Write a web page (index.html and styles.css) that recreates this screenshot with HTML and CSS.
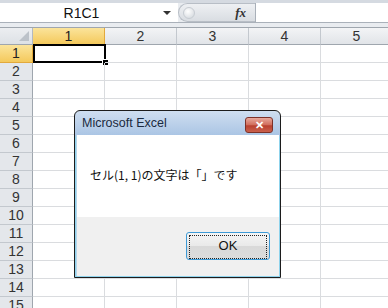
FILE: index.html
```html
<!DOCTYPE html>
<html lang="ja">
<head>
  <meta charset="UTF-8" />
  <title>Excel</title>
  <link rel="stylesheet" href="styles.css">
</head>
<body>

<div id="formula-bar">
  <div class="namebox">
    <span class="name">R1C1</span>
    <span class="drop"></span>
  </div>
  <div class="fx-box">
    <span class="knob"></span>
    <span class="fx">fx</span>
  </div>
  <div class="formula-input"></div>
</div>

<div id="sheet"></div>

<!-- メッセージボックス -->
<div class="dialog">
  <div class="dialog-title">
    <span>Microsoft Excel</span>
    <div class="close-btn">✕</div>
  </div>
  <div class="dialog-body">
    <p class="message">セル(1, 1)の文字は「」です</p>
  </div>
  <div class="dialog-foot">
    <button class="ok-btn"><span>OK</span></button>
  </div>
</div>

<script>
  const sheet = document.getElementById("sheet");
  let html = '<div class="corner"></div>';
  for (let c = 1; c <= 5; c++) {
    html += `<div class="colh${c === 1 ? ' active' : ''}">${c}</div>`;
  }
  for (let r = 1; r <= 15; r++) {
    html += `<div class="rowh${r === 1 ? ' active' : ''}">${r}</div>`;
    for (let c = 1; c <= 5; c++) {
      if (r === 1 && c === 1) {
        html += '<div class="cell"><div class="sel"><i class="handle"></i></div></div>';
      } else {
        html += '<div class="cell"></div>';
      }
    }
  }
  sheet.innerHTML = html;
</script>

</body>
</html>
```

FILE: styles.css
```css
body {
  margin: 0;
  width: 388px;
  height: 308px;
  overflow: hidden;
  background-color: #fff;
  font-family: 'Liberation Sans', Arial, sans-serif;
  color: #222;
  position: relative;
}

/* 数式バー */
#formula-bar {
  height: 28px;
  box-sizing: border-box;
  padding-top: 3px;
  background: linear-gradient(#d5dae1 0, #d5dae1 3px, #e9ecf0 3px);
  border-bottom: 1px solid #9fa6ae;
  display: flex;
  align-items: flex-start;
  position: relative;
}

#formula-bar::after {
  content: "";
  position: absolute;
  left: 0; right: 0; top: 22px;
  height: 1px;
  background-color: #aab1ba;
}

.namebox {
  width: 178px;
  height: 19px;
  background-color: #fff;
  display: flex;
  align-items: center;
  position: relative;
}

.name {
  flex: 1;
  text-align: center;
  font-size: 14px;
  color: #111;
}

.drop {
  width: 0;
  height: 0;
  border-left: 4px solid transparent;
  border-right: 4px solid transparent;
  border-top: 4px solid #333;
  margin-right: 7px;
}

.fx-box {
  width: 77px;
  height: 19px;
  box-sizing: border-box;
  border-radius: 10px 0 0 10px;
  border: 1px solid #b8bec6;
  border-right: none;
  background: linear-gradient(#eef0f3, #d9dde2);
  display: flex;
  align-items: center;
  justify-content: space-between;
  padding: 0 9px 0 4px;
}

.knob {
  width: 10px;
  height: 10px;
  border-radius: 50%;
  background: radial-gradient(circle at 40% 35%, #fff, #cfd4da);
  border: 1px solid #c7ccd2;
}

.fx {
  font-family: 'Liberation Serif', serif;
  font-style: italic;
  font-weight: bold;
  font-size: 13px;
  color: #333;
}

.formula-input {
  flex: 1;
  height: 19px;
  background-color: #fff;
  border-left: 1px solid #a9b0b9;
}

/* シート */
#sheet {
  display: grid;
  grid-template-columns: 33px repeat(5, 72px);
  grid-template-rows: 17px;
  grid-auto-rows: 18px;
}

#sheet > div {
  box-sizing: border-box;
}

.corner {
  background: linear-gradient(#eceef1, #dde1e6);
  border-right: 1px solid #b3b9c1;
  border-bottom: 1px solid #9fa6ae;
  position: relative;
}

.corner::after {
  content: "";
  position: absolute;
  right: 3px;
  bottom: 3px;
  border-left: 10px solid transparent;
  border-bottom: 10px solid #bcc2c9;
}

.colh {
  background: linear-gradient(#f3f4f6, #e1e4e8);
  border-right: 1px solid #c3c8ce;
  border-bottom: 1px solid #9fa6ae;
  text-align: center;
  font-size: 14px;
  line-height: 16px;
  color: #333;
}

.rowh {
  background-color: #e4e7eb;
  border-right: 1px solid #9fa6ae;
  border-bottom: 1px solid #c3c8ce;
  text-align: center;
  font-size: 14px;
  line-height: 17px;
  color: #333;
}

.colh.active,
.rowh.active {
  background: linear-gradient(#fbe49b, #f4c95c);
  border-color: #e2a93c;
  color: #222;
}

.cell {
  border-right: 1px solid #dadcdf;
  border-bottom: 1px solid #dadcdf;
  position: relative;
}

.sel {
  position: absolute;
  top: -1px; left: 0; right: -2px; bottom: -1px;
  border: 2px solid #000;
}

.handle {
  position: absolute;
  right: -5px;
  bottom: -5px;
  width: 5px;
  height: 5px;
  background-color: #000;
  border: 1px solid #fff;
}

/* ダイアログ */
.dialog {
  position: absolute;
  left: 74px;
  top: 110px;
  width: 207px;
  height: 168px;
  box-sizing: border-box;
  border: 1px solid #1c1c1c;
  border-radius: 6px 6px 0 0;
  background: linear-gradient(#cfdef0, #a9c4e4 25px, #8fd3ec 26px);
  padding: 0 1px 1px;
  display: flex;
  flex-direction: column;
}

.dialog-title {
  height: 24px;
  display: flex;
  align-items: center;
  justify-content: space-between;
  padding: 0 6px;
  font-size: 12.5px;
  color: #1a2a40;
}

.close-btn {
  width: 28px;
  height: 16px;
  box-sizing: border-box;
  border: 1px solid #7d3128;
  border-radius: 3px;
  background: linear-gradient(#e8a99c, #d06c5b 50%, #b9402f 55%, #c9604c);
  color: #fff;
  font-weight: bold;
  font-size: 11px;
  text-align: center;
  line-height: 14px;
  margin-top: 4px;
}

.dialog-body {
  height: 82px;
  background-color: #fff;
  border-left: 1px solid #b6d6ec;
}

.message {
  margin: 31px 0 0 13px;
  font-family: 'Noto Sans CJK JP', sans-serif;
  font-size: 12px;
  line-height: 18px;
  color: #111;
}

.dialog-foot {
  flex: 1;
  background-color: #f0f0f0;
  border-left: 1px solid #b6d6ec;
  display: flex;
  justify-content: flex-end;
  align-items: flex-start;
  padding: 15px 9px 0 0;
}

.ok-btn {
  width: 84px;
  height: 28px;
  box-sizing: border-box;
  border: 1px solid #3d9ad6;
  border-radius: 3px;
  background: linear-gradient(#f5f5f5, #e9e9e9 50%, #d9d9d9 51%, #dcdcdc);
  padding: 2px;
  font-family: 'Liberation Sans', sans-serif;
  font-size: 13px;
  color: #111;
}

.ok-btn span {
  display: block;
  height: 100%;
  border: 1px dotted #222;
  line-height: 20px;
}
```
